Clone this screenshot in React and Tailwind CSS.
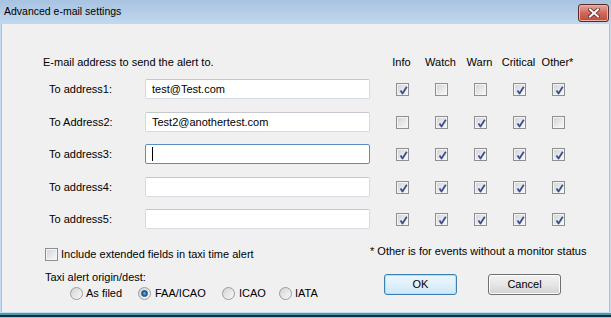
import React from "react";

const FONT = { fontFamily: '"Liberation Sans", Arial, sans-serif' };

function Check({ checked }) {
  return (
    <div className="relative w-[13px] h-[13px] border border-[#8f8f8f] bg-[#f4f4f4] p-[1px]">
      <div className="w-full h-full bg-linear-to-br from-[#d3d6da] to-[#f7f7f7]" />
      {checked && (
        <svg className="absolute left-[1px] top-[1px]" width="11" height="11" viewBox="0 0 11 11">
          <path d="M2.5 5.5 L4.5 8.5 L8.8 1.8" fill="none" stroke="#3c4f8c" strokeWidth="1.8" strokeLinejoin="round" />
        </svg>
      )}
    </div>
  );
}

function Radio({ checked }) {
  return (
    <div className="relative w-[13px] h-[13px] rounded-full border border-[#9a9a9a] bg-linear-to-br from-[#d0d3d6] to-[#fafafa] flex items-center justify-center">
      {checked && (
        <div className="w-[7px] h-[7px] rounded-full bg-radial from-[#7ab6e8] via-[#2a6fb5] to-[#154a82] border border-[#1c4b7c]" />
      )}
    </div>
  );
}

function Input({ value, focused }) {
  return (
    <div
      className={
        "w-[225px] h-[20px] bg-white border rounded-[2px] flex items-center pl-[6px] text-[11px] text-black " +
        (focused ? "border-[#5b8fc3]" : "border-[#d5dbe2] border-t-[#c3c8ce]")
      }
    >
      {focused ? <div className="w-[1px] h-[14px] bg-black" /> : value}
    </div>
  );
}

const rows = [
  { label: "To address1:", value: "test@Test.com", checks: [1, 0, 0, 1, 1] },
  { label: "To Address2:", value: "Test2@anothertest.com", checks: [0, 1, 1, 1, 0] },
  { label: "To address3:", value: "", focused: true, checks: [1, 1, 1, 1, 1] },
  { label: "To address4:", value: "", checks: [1, 1, 1, 1, 1] },
  { label: "To address5:", value: "", checks: [1, 1, 1, 1, 1] },
];

const rowMargins = ["mt-[9px]", "mt-[13px]", "mt-[12px]", "mt-[13px]", "mt-[12px]"];

function Button({ children, primary }) {
  return (
    <div
      className={
        "w-[73px] h-[21px] rounded-[3px] border flex items-center justify-center text-[11px] text-black " +
        (primary
          ? "border-[#3c7fb1] bg-linear-to-b from-[#eaf6fd] via-[#e0f0fa] to-[#cde7f7] shadow-[inset_0_0_0_1px_#b3e0f9]"
          : "border-[#707070] bg-linear-to-b from-[#f2f2f2] via-[#e6e6e6] to-[#d2d2d2] shadow-[inset_0_0_0_1px_#fcfcfc]")
      }
    >
      {children}
    </div>
  );
}

export default function App() {
  return (
    <div className="w-[611px] h-[318px] flex flex-col bg-[#c6dbef] overflow-hidden" style={FONT}>
      {/* Title bar */}
      <div className="h-[24px] shrink-0 flex items-center justify-between bg-linear-to-b from-[#a7c3e1] to-[#c2d8ee] pl-[4px] pr-[2px]">
        <span className="text-[10.5px] text-black">Advanced e-mail settings</span>
        <div className="w-[31px] h-[18px] mt-[1px] rounded-[3px] border border-[#5a2a26] bg-linear-to-b from-[#e5a89e] via-[#d0685a] to-[#c24a3b] flex items-center justify-center shadow-[inset_0_0_0_1px_#eab3aa]">
          <svg width="12" height="10" viewBox="0 0 12 10">
            <path d="M2 1.5 L10 8.5 M10 1.5 L2 8.5" stroke="#5a2a26" strokeWidth="3.6" strokeLinecap="square" />
            <path d="M2 1.5 L10 8.5 M10 1.5 L2 8.5" stroke="#ffffff" strokeWidth="2" strokeLinecap="square" />
          </svg>
        </div>
      </div>

      {/* Body */}
      <div className="h-[288px] shrink-0 ml-[1px] mr-[1px] border-l border-r border-[#a9c2da] bg-[#f0f0f0] flex flex-col text-[11px] text-black">
        {/* header */}
        <div className="flex items-center h-[16px] mt-[30px]">
          <div className="w-[367px] pl-[41px]">E-mail address to send the alert to.</div>
          <div className="flex ml-[13px]">
            {["Info", "Watch", "Warn", "Critical", "Other*"].map((h) => (
              <div key={h} className="w-[39px] text-center">{h}</div>
            ))}
          </div>
        </div>

        {rows.map((r, i) => (
          <div key={i} className={"flex items-center " + rowMargins[i]}>
            <div className="w-[143px] pl-[47px]">{r.label}</div>
            <Input value={r.value} focused={r.focused} />
            <div className="flex ml-[13px]">
              {r.checks.map((c, j) => (
                <div key={j} className="w-[39px] flex justify-center">
                  <Check checked={!!c} />
                </div>
              ))}
            </div>
          </div>
        ))}

        {/* bottom section */}
        <div className="flex mt-[14px]">
          <div className="w-[368px] pl-[43px] flex flex-col">
            <div className="flex items-center h-[16px] mt-[3px]">
              <Check checked={false} />
              <span className="ml-[3px]">Include extended fields in taxi time alert</span>
            </div>
            <div className="h-[16px] mt-[7px] flex items-center">Taxi alert origin/dest:</div>
            <div className="flex items-center h-[16px] mt-[0px] pl-[25px]">
              <div className="w-[68px] flex items-center">
                <Radio />
                <span className="ml-[3px]">As filed</span>
              </div>
              <div className="w-[84px] flex items-center">
                <Radio checked />
                <span className="ml-[4px]">FAA/ICAO</span>
              </div>
              <div className="w-[57px] flex items-center">
                <Radio />
                <span className="ml-[4px]">ICAO</span>
              </div>
              <div className="flex items-center">
                <Radio />
                <span className="ml-[3px]">IATA</span>
              </div>
            </div>
          </div>
          <div className="flex flex-col">
            <div className="h-[16px] flex items-center">* Other is for events without a monitor status</div>
            <div className="flex mt-[15px] pl-[14px] gap-[31px]">
              <Button primary>OK</Button>
              <Button>Cancel</Button>
            </div>
          </div>
        </div>
      </div>

      {/* bottom frame */}
      <div className="h-[1px] shrink-0 bg-[#c5dcee]" />
      <div className="h-[2px] shrink-0 bg-[#4f98ae]" />
      <div className="h-[2px] shrink-0 bg-[#0f2f38]" />
      <div className="h-[1px] shrink-0 bg-[#9ec8d8]" />
    </div>
  );
}
